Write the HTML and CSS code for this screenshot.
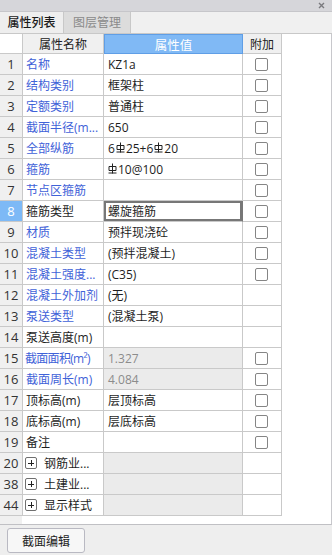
FILE: index.html
```html
<!DOCTYPE html>
<html lang="zh">
<head>
<meta charset="utf-8">
<link rel="stylesheet" href="styles.css">
</head>
<body>
<div class="app">
  <div class="titlebar">
    <svg class="close" width="7" height="7" viewBox="0 0 7 7"><path d="M1 1L6 6M6 1L1 6" stroke="#7a7a7e" stroke-width="1.4"/></svg>
  </div>
  <div class="tabs">
    <div class="tab active">属性列表</div>
    <div class="tab">图层管理</div>
  </div>
  <div class="grid-area">
    <div class="table">
      <div class="row head">
        <div class="c num"></div>
        <div class="c name">属性名称</div>
        <div class="c val">属性值</div>
        <div class="c att">附加</div>
      </div>
      <div class="row"><div class="c num">1</div><div class="c name blue">名称</div><div class="c val">KZ1a</div><div class="c att"><span class="cb"></span></div></div>
      <div class="row"><div class="c num">2</div><div class="c name blue">结构类别</div><div class="c val">框架柱</div><div class="c att"><span class="cb"></span></div></div>
      <div class="row"><div class="c num">3</div><div class="c name blue">定额类别</div><div class="c val">普通柱</div><div class="c att"><span class="cb"></span></div></div>
      <div class="row"><div class="c num">4</div><div class="c name blue">截面半径(m...</div><div class="c val">650</div><div class="c att"><span class="cb"></span></div></div>
      <div class="row"><div class="c num">5</div><div class="c name blue">全部纵筋</div><div class="c val">6<svg class="rb" width="9" height="11" viewBox="0 0 9 11"><path d="M4.5 0.5V10.5M1 3.5H8V7.5H1ZM0.5 10H8.5" stroke="#222" stroke-width="1" fill="none"/></svg>25+6<svg class="rb" width="9" height="11" viewBox="0 0 9 11"><path d="M4.5 0.5V10.5M1 3.5H8V7.5H1ZM0.5 10H8.5" stroke="#222" stroke-width="1" fill="none"/></svg>20</div><div class="c att"><span class="cb"></span></div></div>
      <div class="row"><div class="c num">6</div><div class="c name blue">箍筋</div><div class="c val"><svg class="rb first" width="9" height="11" viewBox="0 0 9 11"><path d="M4.5 0.5V10.5M1 3.5H8V7.5H1ZM0.5 10H8.5" stroke="#222" stroke-width="1" fill="none"/></svg>10@100</div><div class="c att"><span class="cb"></span></div></div>
      <div class="row"><div class="c num">7</div><div class="c name blue">节点区箍筋</div><div class="c val"></div><div class="c att"><span class="cb"></span></div></div>
      <div class="row sel"><div class="c num">8</div><div class="c name">箍筋类型</div><div class="c val">螺旋箍筋</div><div class="c att"><span class="cb"></span></div></div>
      <div class="row"><div class="c num">9</div><div class="c name blue">材质</div><div class="c val">预拌现浇砼</div><div class="c att"><span class="cb"></span></div></div>
      <div class="row"><div class="c num">10</div><div class="c name blue">混凝土类型</div><div class="c val">(预拌混凝土)</div><div class="c att"><span class="cb"></span></div></div>
      <div class="row"><div class="c num">11</div><div class="c name blue">混凝土强度...</div><div class="c val">(C35)</div><div class="c att"><span class="cb"></span></div></div>
      <div class="row"><div class="c num">12</div><div class="c name blue">混凝土外加剂</div><div class="c val">(无)</div><div class="c att"></div></div>
      <div class="row"><div class="c num">13</div><div class="c name blue">泵送类型</div><div class="c val">(混凝土泵)</div><div class="c att"></div></div>
      <div class="row"><div class="c num">14</div><div class="c name">泵送高度(m)</div><div class="c val"></div><div class="c att"></div></div>
      <div class="row"><div class="c num">15</div><div class="c name blue tight">截面面积(m²)</div><div class="c val ro">1.327</div><div class="c att"><span class="cb"></span></div></div>
      <div class="row"><div class="c num">16</div><div class="c name blue">截面周长(m)</div><div class="c val ro">4.084</div><div class="c att"><span class="cb"></span></div></div>
      <div class="row"><div class="c num">17</div><div class="c name">顶标高(m)</div><div class="c val">层顶标高</div><div class="c att"><span class="cb"></span></div></div>
      <div class="row"><div class="c num">18</div><div class="c name">底标高(m)</div><div class="c val">层底标高</div><div class="c att"><span class="cb"></span></div></div>
      <div class="row"><div class="c num">19</div><div class="c name">备注</div><div class="c val"></div><div class="c att"><span class="cb"></span></div></div>
      <div class="row"><div class="c num">20</div><div class="c name grp"><span class="plus"></span>钢筋业...</div><div class="c val ro"></div><div class="c att"></div></div>
      <div class="row"><div class="c num">38</div><div class="c name grp"><span class="plus"></span>土建业...</div><div class="c val ro"></div><div class="c att"></div></div>
      <div class="row"><div class="c num">44</div><div class="c name grp"><span class="plus"></span>显示样式</div><div class="c val ro"></div><div class="c att"></div></div>
    </div>
    <div class="filler"><div class="fnum"></div></div>
  </div>
  <div class="footer">
    <button class="btn">截面编辑</button>
  </div>
</div>
</body>
</html>
```
FILE: styles.css
```css
* { box-sizing: border-box; }
html, body { margin: 0; padding: 0; }
body {
  width: 332px;
  height: 555px;
  overflow: hidden;
  background: #eeeeee;
  font-family: "Open Sans", "Noto Sans CJK SC", sans-serif;
  font-size: 12px;
  color: #1e1e1e;
}
.app { display: flex; flex-direction: column; height: 555px; }
.titlebar {
  height: 11px;
  background: #d6d6da;
  display: flex;
  justify-content: flex-end;
  align-items: center;
  padding-right: 7px;
}
.close { display: block; }
.tabs {
  height: 23px;
  background: #f0f0f0;
  border-top: 1px solid #c6c6ca;
  border-bottom: 1px solid #c8c8c8;
  display: flex;
}
.tab {
  width: 67px;
  display: flex;
  align-items: center;
  justify-content: center;
  color: #8a8a8a;
  background: #dcdcdc;
  border-right: 1px solid #c8c8c8;
  font-size: 12px;
  padding-bottom: 1px;
}
.tab.active {
  width: 64px;
  color: #1a1a1a;
  background: #eeeeee;
  font-weight: 500;
}
.grid-area {
  height: 491px;
  background: #fff;
  border-right: 1px solid #c8c8cc;
  border-bottom: 1px solid #c0c0c4;
  display: flex;
  flex-direction: column;
}
.table { width: 282px; display: flex; flex-direction: column; }
.row {
  display: grid;
  grid-template-columns: 23px 81px 139px 39px;
  height: 21px;
}
.c {
  border-right: 1px solid #c9c9c9;
  border-bottom: 1px solid #c9c9c9;
  display: flex;
  align-items: center;
  white-space: nowrap;
  overflow: hidden;
}
.num {
  justify-content: center;
  background: #f0f0f0;
  color: #333;
  font-size: 13px;
}
.name { padding-left: 3px; }
.name.tight { letter-spacing: -0.7px; padding-left: 2px; }
.blue { color: #3f62d8; }
.val { padding-left: 4px; }
.val.ro { background: #ebebeb; color: #8c8c8c; }
.att { justify-content: center; padding-right: 2px; }
.cb {
  width: 13px;
  height: 13px;
  border: 1px solid #858585;
  border-radius: 2px;
  background: #fff;
}
.rb { margin: 0 1px; position: relative; top: -1px; }
.rb.first { margin-left: 0; }
.head { height: 20px; }
.head .num { background: #fff; }
.head .name { background: #f0f0f0; justify-content: center; padding-left: 0; color: #222; }
.head .val {
  background: #80b9f5;
  color: #fff;
  justify-content: center;
  padding-left: 0;
  border: 1px solid #5f9ee6;
  font-size: 12.5px;
}
.head .att { background: #f0f0f0; color: #222; padding-right: 0; }
.sel .num { background: #7db9f6; color: #fff; }
.sel .val { box-shadow: inset 0 0 0 2px #777; border-right-color: #777; }
.grp { padding-left: 2px; }
.plus {
  width: 12px;
  height: 12px;
  border: 1px solid #6f6f6f;
  border-radius: 2px;
  margin-right: 7px;
  position: relative;
  flex: none;
}
.plus::before, .plus::after {
  content: "";
  position: absolute;
  background: #222;
}
.plus::before { left: 2px; right: 2px; top: 4.5px; height: 1px; }
.plus::after { top: 2px; bottom: 2px; left: 4.5px; width: 1px; }
.filler { flex: 1; display: flex; }
.fnum { width: 22px; background: #f0f0f0; }
.footer { flex: 1; padding: 3px 0 0 7px; }
.btn {
  width: 78px;
  height: 25px;
  border: 1px solid #b9b9c2;
  border-radius: 3px;
  background: #f7f7f7;
  font-family: "Open Sans", "Noto Sans CJK SC", sans-serif;
  font-size: 12px;
  color: #222;
  padding: 0;
}
```
